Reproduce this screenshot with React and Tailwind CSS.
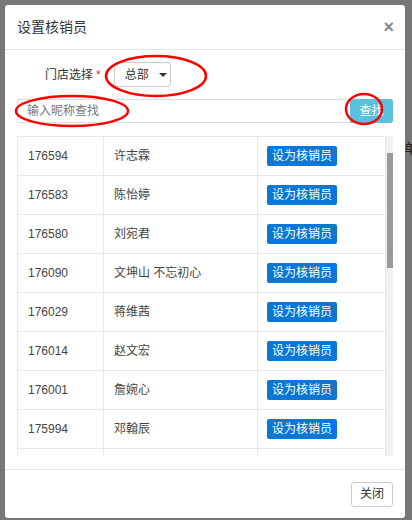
import React from 'react';

const rows = [
  ['176594', '许志霖'],
  ['176583', '陈怡婷'],
  ['176580', '刘宛君'],
  ['176090', '文坤山 不忘初心'],
  ['176029', '蒋维茜'],
  ['176014', '赵文宏'],
  ['176001', '詹婉心'],
  ['175994', '邓翰辰'],
  ['175990', '林子涵'],
];

const App = () => {
  return (
    <div
      className="relative w-[412px] h-[520px] overflow-hidden bg-[#777777] text-[12px] text-[#333]"
      style={{ fontFamily: '"Liberation Sans", "Noto Sans CJK SC", sans-serif' }}
    >
      {/* page behind the overlay */}
      <span className="absolute left-[404px] top-[138px] whitespace-nowrap text-[14px] text-[#222]">单核</span>

      <div className="absolute left-[5px] top-[5px] w-[400px] h-[513px] bg-white rounded-[3px] flex flex-col">
        {/* Header */}
        <div className="h-[45px] flex items-center justify-between px-[12px] border-b border-[#e5e5e5]">
          <h4 className="text-[14px] text-[#333] leading-none">设置核销员</h4>
          <span className="text-[18px] font-bold text-[#888] leading-none mr-[-1px]">×</span>
        </div>

        {/* Body */}
        <div className="flex-1 flex flex-col px-[12px] pt-[12px]">
          <div className="flex items-center h-[25px]">
            <span className="ml-[28px] text-[#333]">门店选择</span>
            <span className="ml-[3px] text-[#e33]">*</span>
            <button className="ml-[13px] h-[25px] w-[57px] flex items-center pl-[10px] border border-[#ccc] rounded-[3px] bg-white text-[#333]">
              总部
              <span className="ml-[10px] w-0 h-0 border-l-[4px] border-r-[4px] border-t-[4px] border-l-transparent border-r-transparent border-t-[#333]" />
            </button>
          </div>

          <div className="flex mt-[12px] h-[24px]">
            <div className="flex-1 border border-[#ddd] border-r-0 flex items-center pl-[9px] text-[#777]">
              输入昵称查找
            </div>
            <button className="w-[43px] bg-[#5bc0de] text-white rounded-r-[3px]">查找</button>
          </div>

          <div className="flex mt-[13px] h-[320px]">
            <div className="flex-1 overflow-hidden">
              <table className="w-full border-collapse">
                <tbody>
                  {rows.map(([id, name]) => (
                    <tr key={id} className="h-[39px]">
                      <td className="w-[86px] border border-[#e8e8e8] pl-[10px] text-[#444]">{id}</td>
                      <td className="w-[154px] border border-[#e8e8e8] pl-[10px] text-[#444]">{name}</td>
                      <td className="border border-[#e8e8e8] pl-[9px]">
                        <span className="inline-flex items-center h-[20px] px-[5px] bg-[#0a76d6] text-white rounded-[2px]">
                          设为核销员
                        </span>
                      </td>
                    </tr>
                  ))}
                </tbody>
              </table>
            </div>
            <div className="w-[7px] bg-[#f1f1f1] pt-[17px]">
              <div className="w-[6px] ml-[1px] h-[115px] bg-[#999]" />
            </div>
          </div>
        </div>

        {/* Footer */}
        <div className="h-[49px] border-t border-[#e5e5e5] flex items-center justify-end px-[12px]">
          <button className="h-[25px] w-[42px] border border-[#ccc] rounded-[3px] bg-white text-[#333]">关闭</button>
        </div>
      </div>

      {/* red annotation circles */}
      <svg className="absolute inset-0" width="412" height="520">
        <ellipse cx="156" cy="76" rx="50" ry="20" fill="none" stroke="#f00" strokeWidth="2.5" />
        <ellipse cx="72" cy="111" rx="56" ry="15" fill="none" stroke="#f00" strokeWidth="2.5" />
        <ellipse cx="364" cy="109" rx="18" ry="15" fill="none" stroke="#f00" strokeWidth="2.5" />
      </svg>
    </div>
  );
};

export default App;
